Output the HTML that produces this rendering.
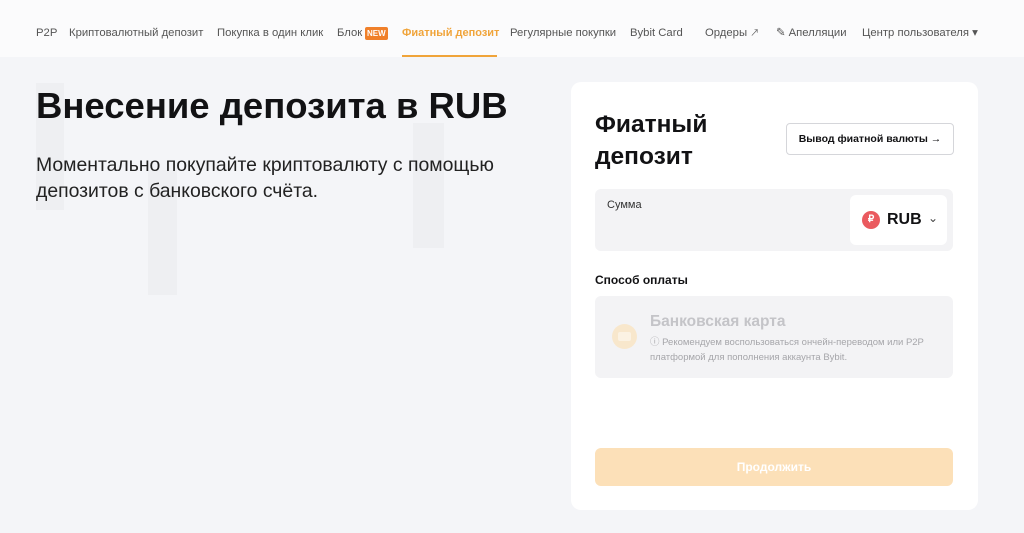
<!DOCTYPE html>
<html><head><meta charset="utf-8"><style>
*{margin:0;padding:0;box-sizing:border-box}
body{width:1024px;height:533px;overflow:hidden;background:#f4f5f8;font-family:"Liberation Sans","Noto Sans CJK SC",sans-serif;position:relative;color:#121214}
.nav{position:absolute;left:0;top:0;width:1024px;height:57px;background:#fbfbfc;font-size:11.3px;color:#555}
.nav span{position:absolute;top:27px;white-space:nowrap;line-height:13px}
.bar{position:absolute;background:#eeeff2}
h1{position:absolute;left:36px;top:85px;font-size:36.5px;font-weight:bold;white-space:nowrap}
.sub{position:absolute;left:36px;top:152px;font-size:19.4px;line-height:26px;color:#222;white-space:nowrap}
.card{position:absolute;left:571px;top:82px;width:407px;height:428px;background:#fff;border-radius:10px}
.in{position:absolute;background:#f3f3f5;border-radius:6px}
</style></head><body>
<div class="nav">
<span style="left:36px">P2P</span>
<span style="left:69px">Криптовалютный депозит</span>
<span style="left:217px">Покупка в один клик</span>
<span style="left:337px">Блок</span>
<span style="left:365px;top:27px;background:#f0802a;color:#fff;font-size:8px;font-weight:bold;padding:0 2px;border-radius:2px">NEW</span>
<span style="left:402px;color:#f0a43a;font-weight:bold;font-size:11px">Фиатный депозит</span>
<div style="position:absolute;left:402px;top:55px;width:95px;height:2px;background:#f0a43a"></div>
<span style="left:510px">Регулярные покупки</span>
<span style="left:630px">Bybit Card</span>
<span style="left:705px">Ордеры <small style="font-size:9px">↗</small></span>
<span style="left:776px">✎ Апелляции</span>
<span style="left:862px">Центр пользователя ▾</span>
</div>
<div class="bar" style="left:36px;top:83px;width:28px;height:127px"></div>
<div class="bar" style="left:148px;top:170px;width:29px;height:125px"></div>
<div class="bar" style="left:413px;top:123px;width:31px;height:125px"></div>
<h1>Внесение депозита в RUB</h1>
<div class="sub">Моментально покупайте криптовалюту с помощью<br>депозитов с банковского счёта.</div>
<div class="card">
<div style="position:absolute;left:24px;top:27px;font-size:24.5px;font-weight:bold;line-height:32px">Фиатный<br>депозит</div>
<div style="position:absolute;left:215px;top:41px;width:168px;height:32px;border:1px solid #d5d6da;border-radius:4px;font-size:10.5px;font-weight:bold;line-height:30px;text-align:center">Вывод фиатной валюты →</div>
<div class="in" style="left:24px;top:107px;width:358px;height:62px">
<div style="position:absolute;left:12px;top:10px;font-size:11px;color:#333">Сумма</div>
<div style="position:absolute;left:255px;top:6px;width:97px;height:50px;background:#fff;border-radius:6px">
<div style="position:absolute;left:12px;top:16px;width:18px;height:18px;border-radius:50%;background:#ea5a5f;color:#fff;font-size:10px;text-align:center;line-height:18px;font-weight:bold">₽</div>
<div style="position:absolute;left:37px;top:16px;font-size:16px;font-weight:bold">RUB</div>
<div style="position:absolute;left:78px;top:16px;font-size:12px;color:#444">⌄</div>
</div></div>
<div style="position:absolute;left:24px;top:191px;font-size:12px;font-weight:bold">Способ оплаты</div>
<div class="in" style="left:24px;top:214px;width:358px;height:82px">
<div style="position:absolute;left:17px;top:28px;width:25px;height:25px;border-radius:50%;background:#f8e7cc"><div style="position:absolute;left:6px;top:8px;width:13px;height:9px;background:#fbf2e3;border-radius:2px"></div></div>
<div style="position:absolute;left:55px;top:17px;font-size:15.5px;font-weight:bold;color:#c4c4c8">Банковская карта</div>
<div style="position:absolute;left:55px;top:39px;font-size:9.5px;line-height:15px;color:#a6a6aa">ⓘ Рекомендуем воспользоваться ончейн-переводом или P2P<br>платформой для пополнения аккаунта Bybit.</div>
</div>
<div style="position:absolute;left:24px;top:366px;width:358px;height:38px;background:#fce0b8;border-radius:6px;color:#fff;font-size:12px;font-weight:bold;text-align:center;line-height:38px">Продолжить</div>
</div>
</body></html>
